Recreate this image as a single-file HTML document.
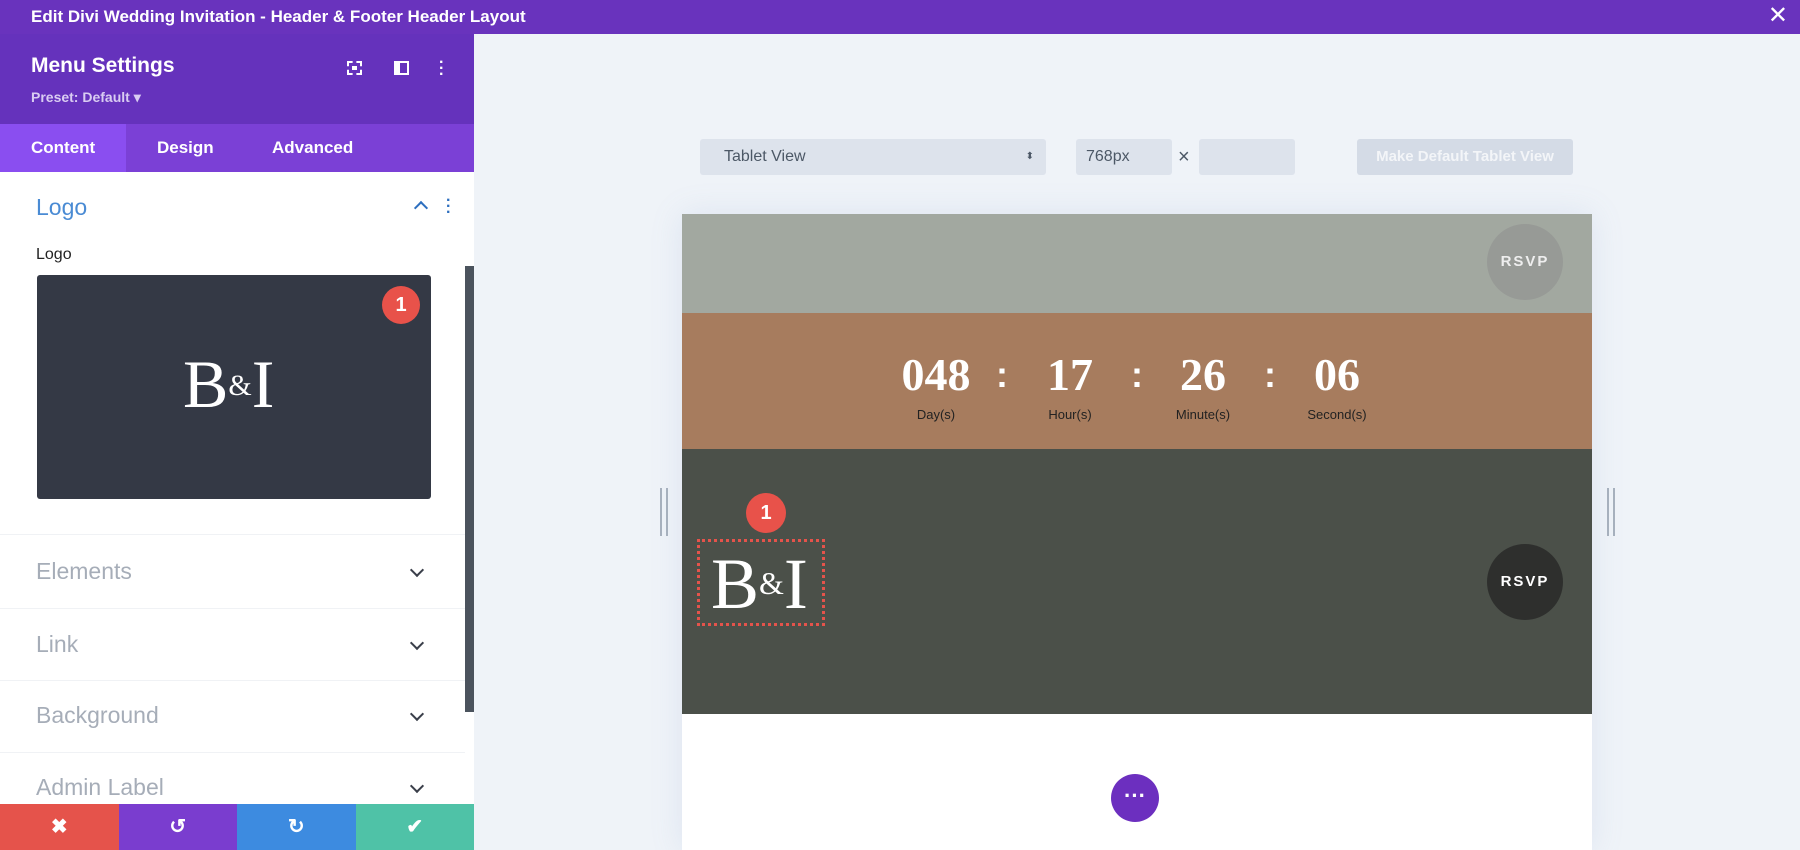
<!DOCTYPE html>
<html><head><meta charset="utf-8"><style>
*{margin:0;padding:0;box-sizing:border-box}
body{width:1800px;height:850px;overflow:hidden;background:#eff3f8;font-family:"Liberation Sans",sans-serif;position:relative}
.a{position:absolute}
.top{left:0;top:0;width:1800px;height:34px;background:#6933bd;color:#fff;font-size:17px;font-weight:bold;line-height:34px;padding-left:31px}
.side{left:0;top:34px;width:474px;height:816px;background:#fff}
.hdr{left:0;top:34px;width:474px;height:90px;background:#6532bc}
.tabs{left:0;top:124px;width:474px;height:48px;background:#7b40d6}
.tab{top:124px;height:48px;line-height:48px;color:#fff;font-size:17px;font-weight:bold}
.sec{left:36px;font-size:23px;color:#a6adb8}
.hr{left:0;width:465px;height:1px;background:#f0f2f5}
.chev{left:412px;width:10px;height:10px;border-right:2.5px solid #3a3f4a;border-bottom:2.5px solid #3a3f4a;transform:rotate(45deg)}
.btn{top:804px;height:46px;width:118.5px;color:#fff;font-size:20px;text-align:center;line-height:46px;font-weight:bold}
.serif{font-family:"Liberation Serif",serif;color:#fff}
.num{top:348px;font-size:46px;width:120px;text-align:center;font-family:"Liberation Serif",serif;color:#fff;font-weight:bold}
.lab{top:407px;font-size:13px;width:120px;text-align:center;color:#222}
.col{top:354px;font-size:36px;color:#fff;font-weight:bold}
</style></head><body>
<div class="a top">Edit Divi Wedding Invitation - Header &amp; Footer Header Layout</div>
<div class="a" style="right:12px;top:4px;color:#fff;font-size:24px;line-height:24px">✕</div>
<div class="a side"></div>
<div class="a hdr"></div>
<div class="a" style="left:31px;top:54px;color:#fff;font-size:21px;font-weight:bold">Menu Settings</div>
<div class="a" style="left:31px;top:89px;color:#d9ccf2;font-size:14px;font-weight:bold">Preset: Default ▾</div>
<div class="a" style="left:347px;top:61px;width:15px;height:14px;border:2px dashed #fff"></div>
<div class="a" style="left:352px;top:66px;width:5px;height:4px;background:#fff"></div>
<div class="a" style="left:394px;top:61px;width:15px;height:14px;border:2px solid #fff;border-left-width:6px"></div>
<div class="a" style="left:439px;top:60px;color:#fff;font-size:16px;line-height:6px;font-weight:bold">·<br>·<br>·</div>
<div class="a tabs"></div>
<div class="a" style="left:0;top:124px;width:126px;height:48px;background:#8a4ef0"></div>
<div class="a tab" style="left:31px">Content</div>
<div class="a tab" style="left:157px">Design</div>
<div class="a tab" style="left:272px">Advanced</div>
<div class="a" style="left:36px;top:194px;font-size:23px;color:#4a8bd4">Logo</div>
<div class="a" style="left:416px;top:203px;width:10px;height:10px;border-left:2.5px solid #2d6fbf;border-top:2.5px solid #2d6fbf;transform:rotate(45deg)"></div>
<div class="a" style="left:446px;top:198px;color:#2d6fbf;font-size:16px;line-height:6px;font-weight:bold">·<br>·<br>·</div>
<div class="a" style="left:36px;top:246px;font-size:16px;color:#222">Logo</div>
<div class="a" style="left:37px;top:275px;width:394px;height:224px;background:#343945;border-radius:3px"></div>
<div class="a serif" style="left:183px;top:346px;font-size:68px;line-height:76px">B<span style="font-size:30px;vertical-align:12px">&amp;</span>I</div>
<div class="a" style="left:382px;top:286px;width:38px;height:38px;border-radius:50%;background:#e8524a;color:#fff;font-weight:bold;font-size:20px;text-align:center;line-height:38px">1</div>
<div class="a hr" style="top:534px"></div>
<div class="a sec" style="top:558px">Elements</div><div class="a chev" style="top:565px"></div>
<div class="a hr" style="top:608px"></div>
<div class="a sec" style="top:631px">Link</div><div class="a chev" style="top:638px"></div>
<div class="a hr" style="top:680px"></div>
<div class="a sec" style="top:702px">Background</div><div class="a chev" style="top:709px"></div>
<div class="a hr" style="top:752px"></div>
<div class="a sec" style="top:774px">Admin Label</div><div class="a chev" style="top:781px"></div>
<div class="a" style="left:465px;top:266px;width:9px;height:446px;background:#4b535d"></div>
<div class="a btn" style="left:0;background:#e5534b">✖</div>
<div class="a btn" style="left:118.5px;background:#7a3dcf">↺</div>
<div class="a btn" style="left:237px;background:#3d8be0">↻</div>
<div class="a btn" style="left:355.5px;width:118.5px;background:#4fc2a7">✔</div>

<div class="a" style="left:700px;top:139px;width:346px;height:36px;background:#dde3ec;border-radius:3px;color:#4c5866;font-size:16px;line-height:36px;padding-left:24px">Tablet View<span style="position:absolute;right:12px;font-size:10px;line-height:36px">⬍</span></div>
<div class="a" style="left:1076px;top:139px;width:96px;height:36px;background:#dde3ec;border-radius:3px;color:#4c5866;font-size:16px;line-height:36px;padding-left:10px">768px</div>
<div class="a" style="left:1178px;top:146px;color:#4c5866;font-size:20px">×</div>
<div class="a" style="left:1199px;top:139px;width:96px;height:36px;background:#dde3ec;border-radius:3px"></div>
<div class="a" style="left:1357px;top:139px;width:216px;height:36px;background:#d4dbe6;border-radius:3px;color:#f3f5f8;font-size:15px;font-weight:bold;line-height:36px;text-align:center">Make Default Tablet View</div>

<div class="a" style="left:682px;top:214px;width:910px;height:636px;background:#fff;box-shadow:0 0 30px rgba(120,150,200,.15)"></div>
<div class="a" style="left:682px;top:214px;width:910px;height:99px;background:#a2a8a0"></div>
<div class="a" style="left:1487px;top:224px;width:76px;height:76px;border-radius:50%;background:#979a96;color:#eee;font-weight:bold;font-size:15px;letter-spacing:2px;text-align:center;line-height:76px">RSVP</div>
<div class="a" style="left:682px;top:313px;width:910px;height:136px;background:#a77c5e"></div>
<div class="a num" style="left:876px">048</div>
<div class="a num" style="left:1010px">17</div>
<div class="a num" style="left:1143px">26</div>
<div class="a num" style="left:1277px">06</div>
<div class="a col" style="left:996px">:</div>
<div class="a col" style="left:1131px">:</div>
<div class="a col" style="left:1264px">:</div>
<div class="a lab" style="left:876px">Day(s)</div>
<div class="a lab" style="left:1010px">Hour(s)</div>
<div class="a lab" style="left:1143px">Minute(s)</div>
<div class="a lab" style="left:1277px">Second(s)</div>
<div class="a" style="left:682px;top:449px;width:910px;height:265px;background:#4b5049"></div>
<div class="a" style="left:697px;top:539px;width:128px;height:87px;border:3px dotted #e5534b"></div>
<div class="a serif" style="left:711px;top:544px;font-size:72px;line-height:78px">B<span style="font-size:32px;vertical-align:14px">&amp;</span>I</div>
<div class="a" style="left:746px;top:493px;width:40px;height:40px;border-radius:50%;background:#e8524a;color:#fff;font-weight:bold;font-size:20px;text-align:center;line-height:40px">1</div>
<div class="a" style="left:1487px;top:544px;width:76px;height:76px;border-radius:50%;background:#2e2f2d;color:#fff;font-weight:bold;font-size:15px;letter-spacing:2px;text-align:center;line-height:76px">RSVP</div>
<div class="a" style="left:1111px;top:774px;width:48px;height:48px;border-radius:50%;background:#6c2fbf;color:#fff;font-size:22px;text-align:center;line-height:44px;font-weight:bold">···</div>
<div class="a" style="left:660px;top:488px;width:8px;height:48px;border-left:2px solid #a6b0bd;border-right:2px solid #a6b0bd"></div>
<div class="a" style="left:1607px;top:488px;width:8px;height:48px;border-left:2px solid #a6b0bd;border-right:2px solid #a6b0bd"></div>
</body></html>
